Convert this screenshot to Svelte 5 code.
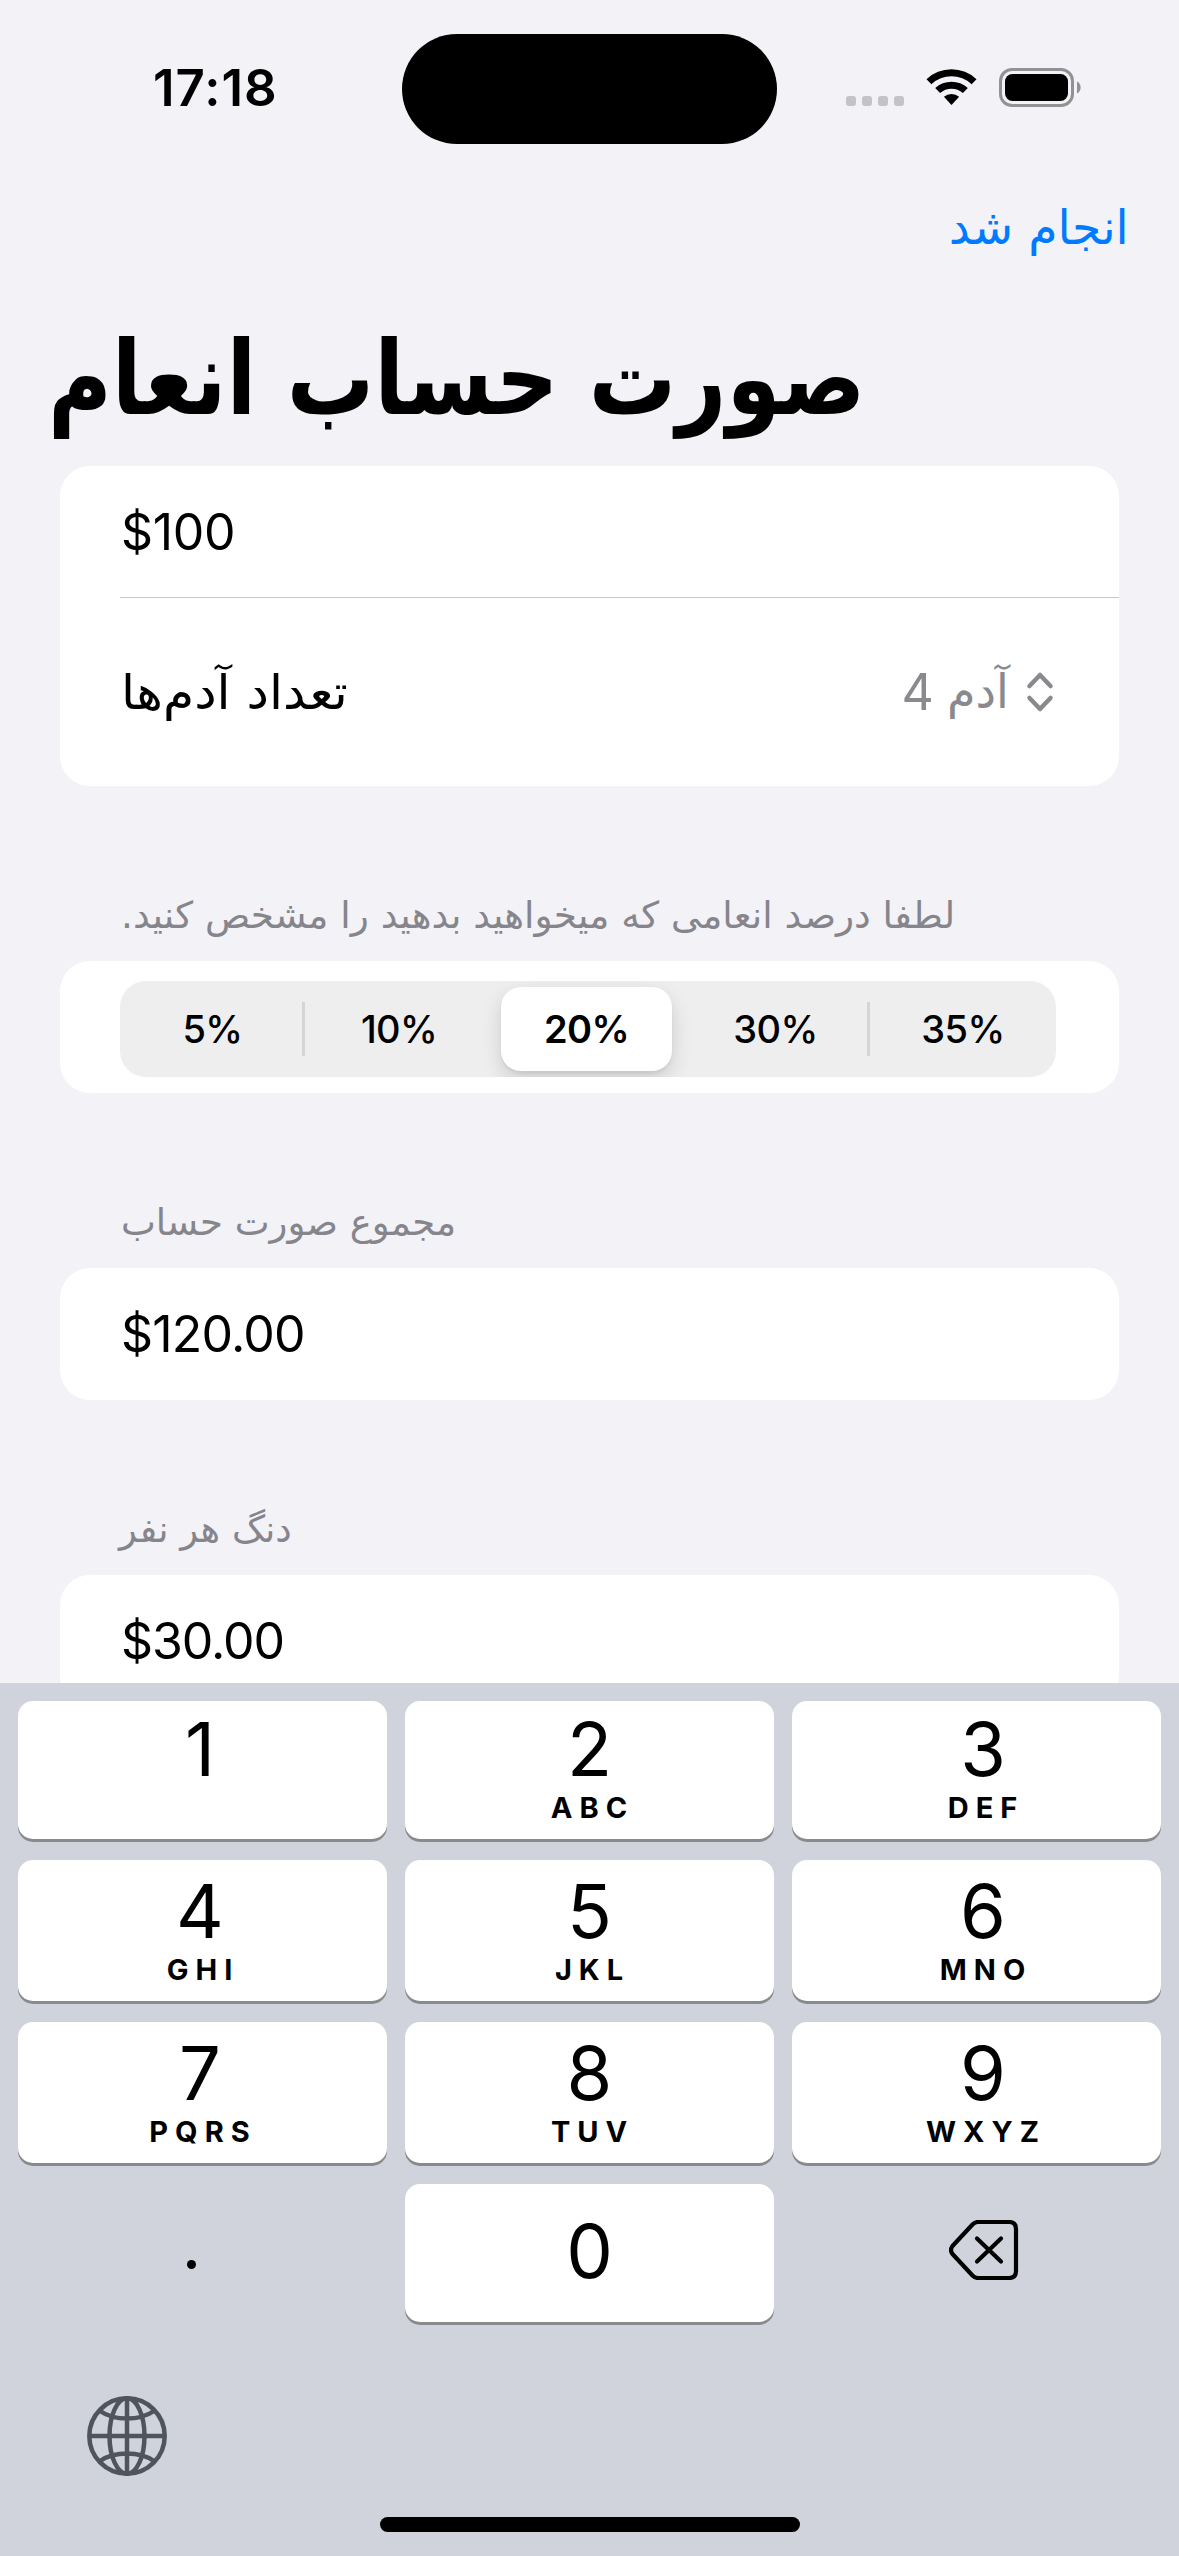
<script>
  const segments = ['5%', '10%', '20%', '30%', '35%'];
  const selected = 2;
  const keys = [
    ['1', ''], ['2', 'ABC'], ['3', 'DEF'],
    ['4', 'GHI'], ['5', 'JKL'], ['6', 'MNO'],
    ['7', 'PQRS'], ['8', 'TUV'], ['9', 'WXYZ']
  ];
</script>

<div class="screen">
  <header class="status">
    <span class="time">17:18</span>
    <div class="island"></div>
    <div class="indicators">
      <div class="dots"><i></i><i></i><i></i><i></i></div>
      <svg class="wifi" width="52" height="38" viewBox="0 0 52 38">
        <path d="M0.5 11.2 A36.5 36.5 0 0 1 50.5 11.2 L45.6 16.2 A29.5 29.5 0 0 0 5.4 16.2 Z" />
        <path d="M9.2 20 A24.2 24.2 0 0 1 41.8 20 L36.9 25 A17.2 17.2 0 0 0 14.1 25 Z" />
        <path d="M17.9 28.8 A11.8 11.8 0 0 1 33.1 28.8 L25.5 37 Z" />
      </svg>
      <svg class="battery" width="84" height="40" viewBox="0 0 84 40">
        <rect x="1.5" y="1.5" width="72" height="36" rx="11.5" fill="none" stroke="#929295" stroke-width="3" />
        <rect x="6" y="6" width="63" height="27" rx="7.5" />
        <path d="M78 13.5 A6.8 6.8 0 0 1 78 25.5 Z" fill="#929295" />
      </svg>
    </div>
  </header>

  <nav class="nav"><button class="done fa" dir="rtl">انجام شد</button></nav>
  <h1 class="title fa"><span dir="rtl">صورت حساب انعام</span></h1>

  <main class="list">
    <section class="card">
      <div class="row short"><span class="money">$100</span></div>
      <div class="row tall">
        <span class="fa people" dir="rtl">تعداد آدم‌ها</span>
        <span class="picker">
          <span class="four">4</span>
          <span class="fa unit">آدم</span>
          <svg width="30" height="42" viewBox="0 0 30 42"><path d="M4.5 15 L15 4 L25.5 15 M4.5 27 L15 38 L25.5 27" /></svg>
        </span>
      </div>
    </section>

    <h2 class="fa"><span class="h-tip" dir="rtl">لطفا درصد انعامی که میخواهید بدهید را مشخص کنید.</span></h2>
    <section class="card seg-card">
      <div class="segmented">
        {#each segments as s, i}
          <button class="seg" class:on={i === selected} class:line={i === 0 || i === 3}>{s}</button>
        {/each}
      </div>
    </section>

    <h2 class="fa"><span class="h-total" dir="rtl">مجموع صورت حساب</span></h2>
    <section class="card"><div class="row"><span class="money">$120.00</span></div></section>

    <h2 class="fa"><span class="h-share" dir="rtl">دنگ هر نفر</span></h2>
    <section class="card"><div class="row"><span class="money tight">$30.00</span></div></section>
  </main>

  <div class="keyboard">
    <div class="keys">
      {#each keys as [d, l]}
        <button class="key"><span class="digit">{d}</span><span class="letters">{l}</span></button>
      {/each}
      <button class="key bare"><i class="point"></i></button>
      <button class="key zero"><span class="digit">0</span></button>
      <button class="key bare" aria-label="delete">
        <svg class="delete" width="70" height="60" viewBox="0 0 70 60">
          <path d="M29 2 H60 Q67 2 67 9 V51 Q67 58 60 58 H29 Q26 58 23.5 55.5 L3.5 34 Q0.5 30 3.5 26 L23.5 4.5 Q26 2 29 2 Z" />
          <path d="M28 18.5 L52 41.5 M52 18.5 L28 41.5" />
        </svg>
      </button>
    </div>
    <div class="tools">
      <svg class="globe" width="80" height="80" viewBox="0 0 80 80">
        <circle cx="40" cy="40" r="37.7" />
        <ellipse cx="40" cy="40" rx="17.5" ry="37.7" />
        <path d="M40 2 V78 M2 40 H78 M13 15 Q24 22.5 40 22.5 Q56 22.5 67 15 M13 65 Q24 57.5 40 57.5 Q56 57.5 67 65" />
      </svg>
    </div>
    <div class="home"></div>
  </div>
</div>

<style>
  :global(body) { background: #f2f2f7; }
  .screen {
    position: relative; width: 1179px; height: 2556px; overflow: hidden;
    display: flex; flex-direction: column;
    background: #f2f2f7; color: #000; font-family: Inter, sans-serif;
  }
  button { border: 0; padding: 0; margin: 0; background: none; font: inherit; color: inherit; }
  .fa { font-family: "DejaVu Sans", sans-serif; }

  .status {
    height: 177px; flex: none; display: grid; grid-template-columns: 402px 375px 402px; align-items: start;
  }
  .time { padding: 58px 0 0 153px; font-size: 51px; line-height: 60px; font-weight: 600; letter-spacing: 1px; }
  .island { margin-top: 34px; height: 110px; border-radius: 55px; background: #000; }
  .indicators { display: flex; align-items: flex-start; padding: 68px 0 0 69px; }
  .dots { display: flex; gap: 6px; margin-top: 28px; width: 80px; }
  .dots i { width: 10px; height: 10px; border-radius: 3px; background: #c4c3c8; }
  .battery { margin-left: 21px; }

  .nav { height: 133px; flex: none; display: flex; justify-content: flex-end; padding: 18px 50px 0 0; box-sizing: border-box; }
  .done { height: 64px; line-height: 64px; font-size: 48px; color: #007aff; transform: scaleX(0.985); transform-origin: 100% 50%; }
  .title { height: 156px; flex: none; margin: 0; padding-left: 48px; font-size: 103px; line-height: 136px; font-weight: 700; white-space: nowrap; }
  .title span, h2 span, .people, .unit { display: inline-block; transform-origin: 0 50%; }
  .title span { transform: scaleX(0.846); }

  .list { padding: 0 60px; }
  .card { background: #fff; border-radius: 30px; }
  .row { height: 132px; box-sizing: border-box; padding: 0 63px 0 61px; display: flex; align-items: center; }
  .row.short { height: 131px; }
  .row.tall {
    height: 189px; justify-content: space-between;
    background: linear-gradient(#c6c6c8, #c6c6c8) 60px 0 / 100% 1px no-repeat;
  }
  .money { font-size: 50px; letter-spacing: -0.8px; }
  .short .money { letter-spacing: -0.3px; }
  .money.tight { letter-spacing: -1.1px; }
  .people { font-size: 48px; transform: scaleX(1.05); }
  .picker { display: flex; align-items: center; color: #8a8a8e; font-size: 50px; }
  .unit { margin-left: 13px; font-size: 47px; transform: scaleX(0.98); margin-right: -2px; }
  .picker svg { margin: 0 1px 0 17px; fill: none; stroke: #8a8a8e; stroke-width: 4.5; stroke-linecap: round; stroke-linejoin: round; }
  h2 { margin: 0; height: 175px; box-sizing: border-box; padding: 102px 0 0 61px; font-size: 37px; line-height: 56px; font-weight: 400; color: #85858b; white-space: nowrap; }
  .h-tip { transform: scaleX(1.012); }
  .h-share { margin-left: -2px; }

  .seg-card { height: 132px; box-sizing: border-box; padding: 20px 63px 16px 60px; }
  .segmented { height: 96px; box-sizing: border-box; border-radius: 26px; background: #eeeeef; overflow: hidden; display: grid; grid-template-columns: 185px 188px 188px 189px 186px; padding: 6px 0; }
  .seg { font-size: 38px; font-weight: 500; letter-spacing: -0.6px; text-align: center; }
  .seg.on { margin: 0 9px 0 8px; background: #fff; border-radius: 20px; font-weight: 600; box-shadow: 0 8px 20px rgba(0,0,0,.14), 0 3px 3px rgba(0,0,0,.05); }
  .seg.line { background: linear-gradient(#d5d5d7, #d5d5d7) 100% 50% / 3px 54px no-repeat; }

  .keyboard { position: absolute; left: 0; top: 1683px; width: 1179px; height: 873px; background: #d0d3db; }
  .keys { display: grid; grid-template-columns: repeat(3, 369px); grid-template-rows: 138px 141px 141px 138px; gap: 21px 18px; padding: 18px 18px 0; }
  .key { box-sizing: border-box; display: flex; flex-direction: column; align-items: center; background: #fff; border-radius: 15px; box-shadow: 0 3px 0 #898a8d; }
  .key:nth-child(3n + 1) { padding-right: 5px; }
  .key:nth-child(3n) { padding-left: 13px; }
  .digit { height: 78px; margin-top: 9px; line-height: 78px; font-size: 74px; }
  .letters { height: 36px; line-height: 36px; margin: 2px -6px 0 0; font-size: 29px; font-weight: 700; letter-spacing: 7px; }
  .key:nth-child(n + 4) .digit { margin-top: 12px; }
  .key.zero { justify-content: flex-start; }
  .key.zero .digit { margin: 28px 0 0; }
  .key.bare { background: none; box-shadow: none; justify-content: center; }
  .point { width: 9px; height: 9px; border-radius: 50%; background: #000; margin: 22px 18px 0 0; }
  .delete { margin: -6px 0 0 1px; fill: none; stroke: #000; stroke-width: 4.2; stroke-linecap: round; stroke-linejoin: round; }
  .tools { padding: 74px 0 0 87px; height: 121px; }
  .globe { fill: none; stroke: #50545d; stroke-width: 4.5; display: block; }
  .home { width: 420px; height: 15px; border-radius: 8px; background: #000; margin: 0 auto; }
</style>
